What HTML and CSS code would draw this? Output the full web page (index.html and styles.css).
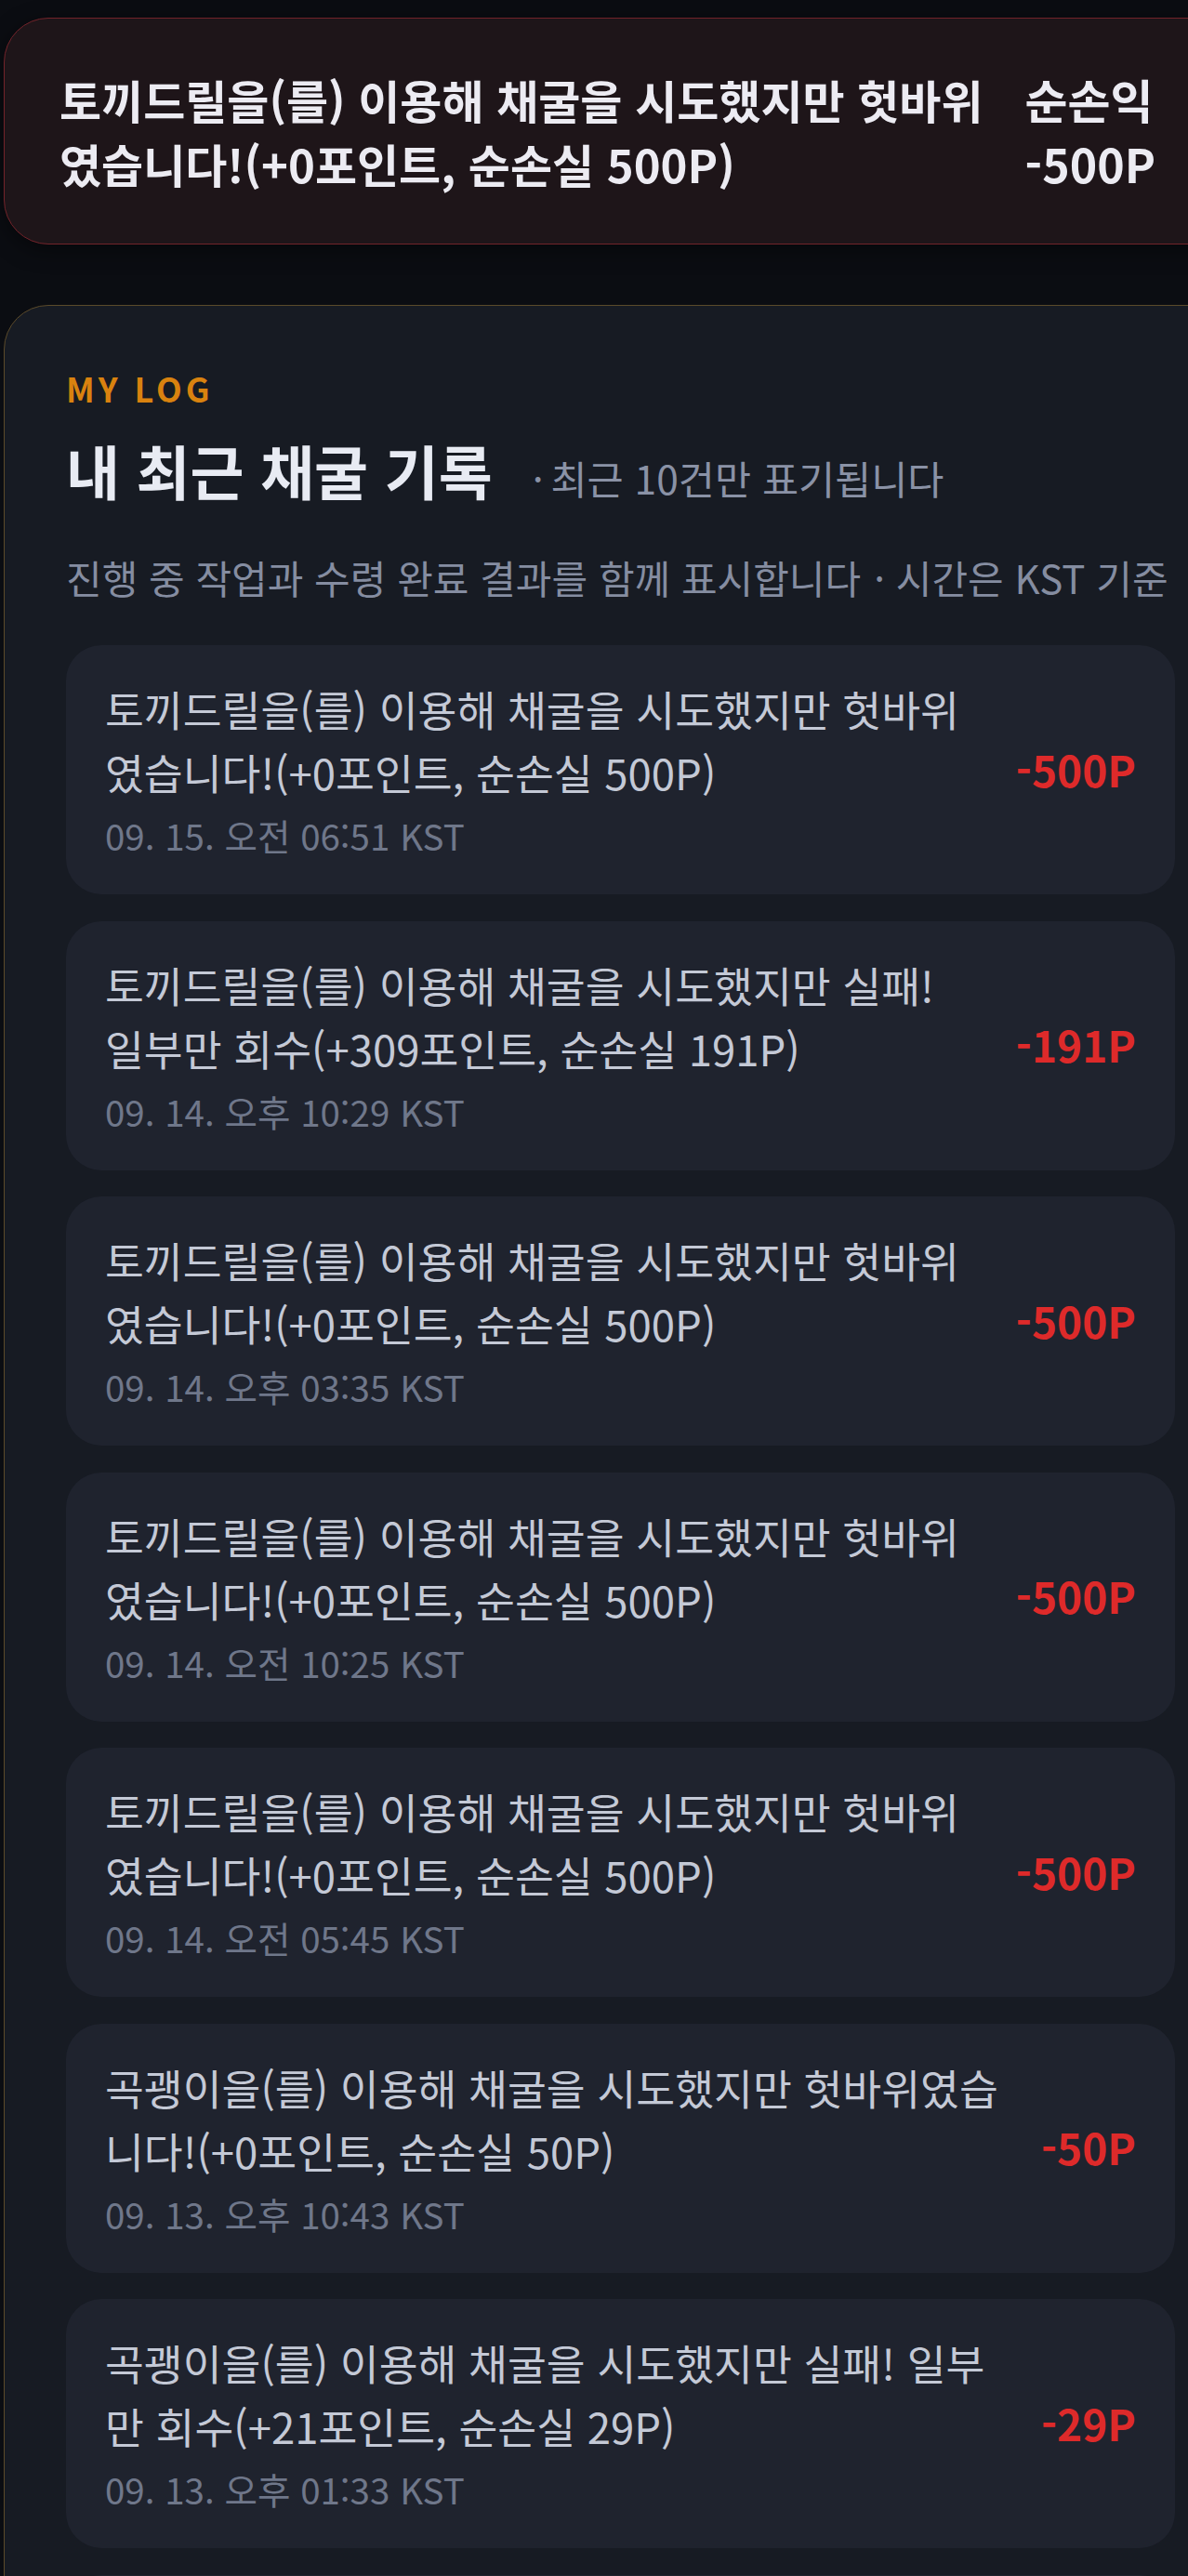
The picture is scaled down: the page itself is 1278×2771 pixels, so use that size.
FILE: index.html
```html
<!DOCTYPE html>
<html lang="ko">
<head>
<meta charset="utf-8">
<title>내 최근 채굴 기록</title>
<link rel="stylesheet" href="styles.css">
</head>
<body>
<div class="page">
  <section class="result-card">
    <p class="result-msg">토끼드릴을(를) 이용해 채굴을 시도했지만 헛바위였습니다!(+0포인트, 순손실 500P)</p>
    <div class="result-net">
      <span>순손익</span>
      <span>-500P</span>
    </div>
  </section>

  <section class="log-card">
    <div class="eyebrow">MY LOG</div>
    <div class="title-row">
      <h2 class="title">내 최근 채굴 기록</h2>
      <span class="sub"><span class="sep">·</span>최근 10건만 표기됩니다</span>
    </div>
    <p class="desc">진행 중 작업과 수령 완료 결과를 함께 표시합니다<span class="sep">·</span>시간은 KST 기준</p>

    <ul class="log-list">
      <li class="log-item">
        <div class="log-body">
          <p class="log-msg">토끼드릴을(를) 이용해 채굴을 시도했지만 헛바위였습니다!(+0포인트, 순손실 500P)</p>
          <p class="log-date">09. 15. 오전 06:51 KST</p>
        </div>
        <span class="log-pts">-500P</span>
      </li>
      <li class="log-item">
        <div class="log-body">
          <p class="log-msg">토끼드릴을(를) 이용해 채굴을 시도했지만 실패! 일부만 회수(+309포인트, 순손실 191P)</p>
          <p class="log-date">09. 14. 오후 10:29 KST</p>
        </div>
        <span class="log-pts">-191P</span>
      </li>
      <li class="log-item">
        <div class="log-body">
          <p class="log-msg">토끼드릴을(를) 이용해 채굴을 시도했지만 헛바위였습니다!(+0포인트, 순손실 500P)</p>
          <p class="log-date">09. 14. 오후 03:35 KST</p>
        </div>
        <span class="log-pts">-500P</span>
      </li>
      <li class="log-item">
        <div class="log-body">
          <p class="log-msg">토끼드릴을(를) 이용해 채굴을 시도했지만 헛바위였습니다!(+0포인트, 순손실 500P)</p>
          <p class="log-date">09. 14. 오전 10:25 KST</p>
        </div>
        <span class="log-pts">-500P</span>
      </li>
      <li class="log-item">
        <div class="log-body">
          <p class="log-msg">토끼드릴을(를) 이용해 채굴을 시도했지만 헛바위였습니다!(+0포인트, 순손실 500P)</p>
          <p class="log-date">09. 14. 오전 05:45 KST</p>
        </div>
        <span class="log-pts">-500P</span>
      </li>
      <li class="log-item">
        <div class="log-body">
          <p class="log-msg">곡괭이을(를) 이용해 채굴을 시도했지만 헛바위였습니다!(+0포인트, 순손실 50P)</p>
          <p class="log-date">09. 13. 오후 10:43 KST</p>
        </div>
        <span class="log-pts">-50P</span>
      </li>
      <li class="log-item">
        <div class="log-body">
          <p class="log-msg">곡괭이을(를) 이용해 채굴을 시도했지만 실패! 일부만 회수(+21포인트, 순손실 29P)</p>
          <p class="log-date">09. 13. 오후 01:33 KST</p>
        </div>
        <span class="log-pts">-29P</span>
      </li>
      <li class="log-item">
        <div class="log-body">
          <p class="log-msg">곡괭이을(를) 이용해 채굴을 시도했지만 헛바위였습니다!(+0포인트, 순손실 50P)</p>
          <p class="log-date">09. 13. 오전 09:12 KST</p>
        </div>
        <span class="log-pts">-50P</span>
      </li>
      <li class="log-item">
        <div class="log-body">
          <p class="log-msg">곡괭이을(를) 이용해 채굴을 시도했지만 헛바위였습니다!(+0포인트, 순손실 50P)</p>
          <p class="log-date">09. 12. 오후 11:08 KST</p>
        </div>
        <span class="log-pts">-50P</span>
      </li>
      <li class="log-item">
        <div class="log-body">
          <p class="log-msg">곡괭이을(를) 이용해 채굴을 시도했지만 실패! 일부만 회수(+18포인트, 순손실 32P)</p>
          <p class="log-date">09. 12. 오후 04:27 KST</p>
        </div>
        <span class="log-pts">-32P</span>
      </li>
    </ul>
  </section>
</div>
</body>
</html>
```

FILE: styles.css
```css
html, body {
  margin: 0;
  padding: 0;
  background: #0b0d12;
  overflow-x: hidden;
}

body {
  font-family: "Noto Sans CJK KR", "Noto Sans", sans-serif;
  color: #e8ebf3;
}

.page {
  width: 1327px;
  margin-left: 4px;
  padding: 19px 0 40px;
  box-sizing: border-box;
}

/* ---------- top result card ---------- */
.result-card {
  display: flex;
  gap: 30px;
  padding: 52px 87px 52px 59px;
  background: #1e1519;
  border: 1px solid #72232a;
  border-radius: 48px;
  box-shadow: 0 6px 24px rgba(0, 0, 0, 0.45);
}

.result-msg {
  flex: 1;
  margin: 0;
  font-size: 49px;
  line-height: 69px;
  font-weight: 700;
  color: #ecebf2;
}

.result-net {
  flex: none;
  display: flex;
  flex-direction: column;
  font-size: 50px;
  line-height: 69px;
  font-weight: 700;
  color: #ecebf2;
}

/* ---------- log card ---------- */
.log-card {
  margin-top: 65px;
  padding: 64px 66px 48px 66px;
  background: #171b23;
  border: 1px solid #5b4a2a;
  border-radius: 48px;
}

.eyebrow {
  font-size: 36px;
  line-height: 48px;
  font-weight: 700;
  letter-spacing: 0.11em;
  color: #d9820f;
}

.title-row {
  display: flex;
  align-items: baseline;
  gap: 35px;
  margin-top: 28px;
}

.title {
  margin: 0;
  font-size: 63px;
  line-height: 72px;
  font-weight: 700;
  color: #e8ebf3;
}

.sub {
  font-size: 42.5px;
  line-height: 42px;
  color: #8a92a6;
}

.sep {
  margin: 0 8px;
}

.desc {
  margin: 50px 0 0;
  font-size: 42px;
  line-height: 60px;
  color: #858da1;
  white-space: nowrap;
}

.desc .sep {
  margin: 0 12px 0 14px;
}

.log-list {
  list-style: none;
  margin: 43px 0 0;
  padding: 0;
  display: flex;
  flex-direction: column;
  gap: 28.5px;
}

.log-item {
  display: flex;
  align-items: center;
  gap: 46px;
  padding: 34px 42px 37px;
  background: #1f232e;
  border-radius: 38px;
}

.log-body {
  flex: 1;
  min-width: 0;
}

.log-msg {
  margin: 0;
  font-size: 45.5px;
  line-height: 68px;
  color: #c4c9d6;
}

.log-date {
  margin: 7px 0 0;
  font-size: 38.5px;
  line-height: 54px;
  color: #6f778a;
}

.log-pts {
  flex: none;
  font-size: 46px;
  font-weight: 700;
  color: #de2a2a;
}
```
